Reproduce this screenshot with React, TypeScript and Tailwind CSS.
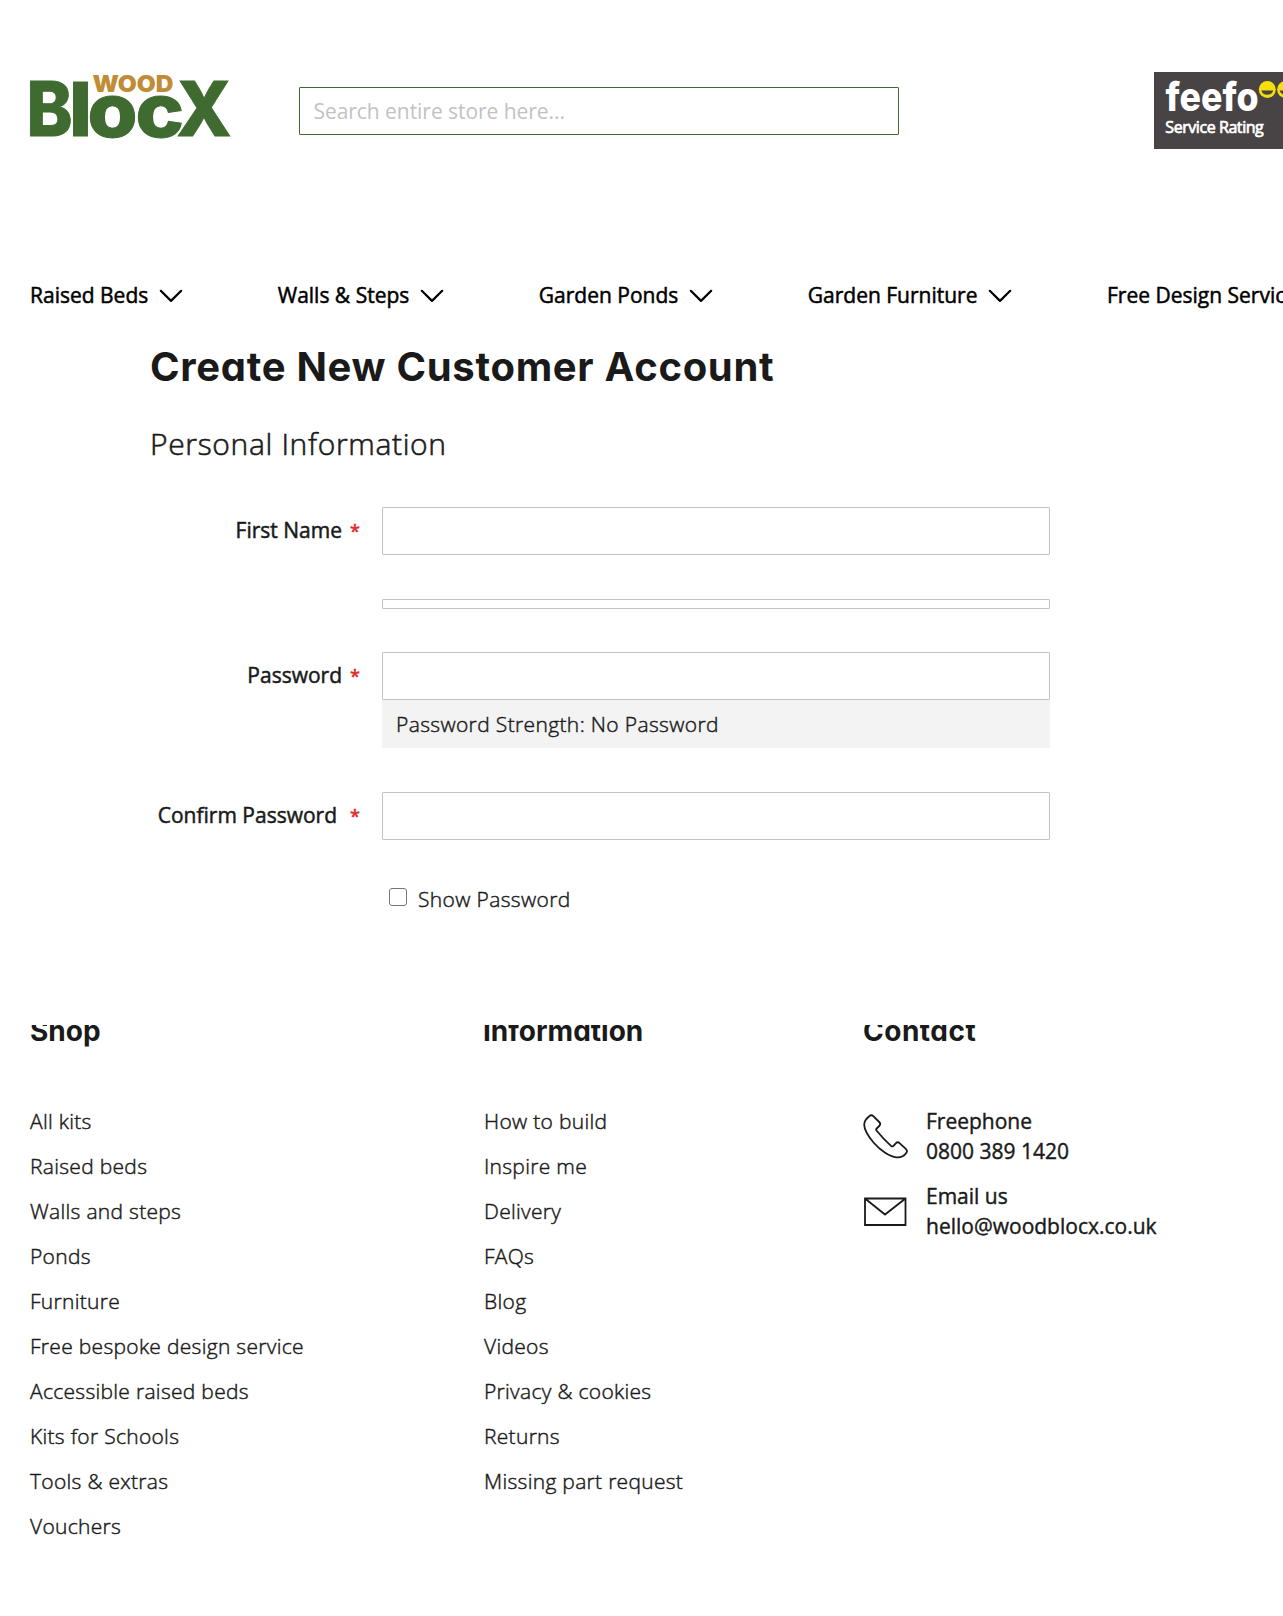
import type { ReactNode } from "react";

const NAV = ["Raised Beds", "Walls & Steps", "Garden Ponds", "Garden Furniture"];

const SHOP = [
  "All kits",
  "Raised beds",
  "Walls and steps",
  "Ponds",
  "Furniture",
  "Free bespoke design service",
  "Accessible raised beds",
  "Kits for Schools",
  "Tools & extras",
  "Vouchers",
];

const INFORMATION = [
  "How to build",
  "Inspire me",
  "Delivery",
  "FAQs",
  "Blog",
  "Videos",
  "Privacy & cookies",
  "Returns",
  "Missing part request",
];

function Logo() {
  return (
    <svg width="202" height="72" viewBox="30 70 202 72" className="block shrink-0 overflow-visible" aria-label="WoodBlocX">
      <g fontFamily="Inter, sans-serif" fontWeight="800" fill="#3f6b30" fontSize="75" stroke="#3f6b30" strokeWidth="1">
        <text x="26.5" y="136.3" textLength="46" lengthAdjust="spacingAndGlyphs">B</text>
        <text x="70" y="136.3" fontSize="74" fontWeight="900" textLength="21" lengthAdjust="spacingAndGlyphs">l</text>
        <text x="87.5" y="136.6" textLength="50" lengthAdjust="spacingAndGlyphs">o</text>
        <text x="135.5" y="136.6" textLength="48.5" lengthAdjust="spacingAndGlyphs">c</text>
        <text x="176.5" y="136.3" textLength="55" lengthAdjust="spacingAndGlyphs">X</text>
      </g>
      <text x="92.5" y="91.5" textLength="81" lengthAdjust="spacingAndGlyphs" fontFamily="Inter, sans-serif" fontWeight="900" fontSize="22.5" fill="#c08c36">
        WOOD
      </text>
    </svg>
  );
}

function Feefo() {
  return (
    <div className="h-[77px] w-[129px] shrink-0 bg-[#484344]">
      <svg width="129" height="77" viewBox="1154 72 129 77" className="block">
        <text x="1165.5" y="110.5" textLength="93" lengthAdjust="spacingAndGlyphs" fontFamily="Inter, sans-serif" fontWeight="800" fontSize="40" fill="#fff">
          feefo
        </text>
        {[1267.3, 1285.6].map((cx) => (
          <g key={cx}>
            <circle cx={cx} cy="89.5" r="8.5" fill="#f5de0c" />
            <path d={`M${cx - 6} 90.5h12a6.2 5.6 0 0 1-12 0z`} fill="#484344" />
          </g>
        ))}
        <text x="1165.3" y="132.5" textLength="98.5" fontFamily="'Open Sans', sans-serif" fontSize="16" fill="#fff" stroke="#fff" strokeWidth="0.7">
          Service Rating
        </text>
      </svg>
    </div>
  );
}

function Chevron() {
  return (
    <svg width="24" height="14" viewBox="0 0 24 14" className="block" fill="none" stroke="#000" strokeWidth="2.2" strokeLinecap="round" strokeLinejoin="round">
      <path d="M1.8 1.8 12 11.9 22.2 1.8" />
    </svg>
  );
}

function Row({ label, labelGap, children }: { label?: string; labelGap?: string; children?: ReactNode }) {
  return (
    <div className="flex">
      <div className="flex w-[231px] shrink-0 justify-end pt-2 pr-[23px] leading-[30px] [-webkit-text-stroke:0.5px_#1a1a1a]">
        {label && (
          <>
            <span className={labelGap}>{label}</span>
            <span className="w-[9px] text-[18px] leading-[32px] text-[#e02b27] [-webkit-text-stroke:0.6px_#e02b27]">*</span>
          </>
        )}
      </div>
      <div className="w-[668px]">{children}</div>
    </div>
  );
}

function Box() {
  return <input className="block h-12 w-full rounded-[1px] border border-[#c2c2c2] bg-white px-3.5 outline-none" />;
}

function FooterTitle({ children, className }: { children: ReactNode; className?: string }) {
  return (
    <div className="h-[25px] overflow-hidden">
      <h3 className={`-mt-[14px] font-['Inter'] text-[28px] leading-10 font-bold whitespace-nowrap [font-feature-settings:'cv11'] ${className ?? ""}`}>
        {children}
      </h3>
    </div>
  );
}

function LinkColumn({ title, links, titleClass }: { title: string; links: string[]; titleClass?: string }) {
  return (
    <div>
      <FooterTitle className={titleClass}>{title}</FooterTitle>
      <ul className="mt-14 flex flex-col gap-[15px] leading-[30px] font-light tracking-[0.3px] [-webkit-text-stroke:0.45px_#1a1a1a]">
        {links.map((l) => (
          <li key={l}>
            <a>{l}</a>
          </li>
        ))}
      </ul>
    </div>
  );
}

export default function App() {
  return (
    <div className="h-[1616px] w-full overflow-hidden bg-white font-['Open_Sans',sans-serif] text-[21px] text-[#1a1a1a]">
      <header className="flex h-[204px] items-start pt-[70px] pl-[30px]">
        <Logo />
        <input
          placeholder="Search entire store here..."
          className="mt-[17px] ml-[67px] h-12 w-[600px] shrink-0 rounded-[1px] border border-[#3f6b30] px-[13.5px] tracking-[-0.05px] outline-none placeholder:text-[#c2c2c2]"
        />
        <div className="mt-0.5 ml-auto">
          <Feefo />
        </div>
      </header>

      <nav className="mt-[76px] flex h-[30px] gap-[95px] pl-[30px] leading-[30px] whitespace-nowrap text-black [-webkit-text-stroke:0.5px_#000]">
        {NAV.map((n) => (
          <a key={n} className="flex items-center gap-[10.5px]">
            {n}
            <span className="pt-0.5">
              <Chevron />
            </span>
          </a>
        ))}
        <a>Free Design Service</a>
      </nav>

      <main className="mt-[34px] h-[681px] pl-[151px]">
        <h1 className="-ml-px font-['Inter'] text-[40px] leading-[46px] font-bold tracking-[0.7px] [font-feature-settings:'cv11']">
          Create New Customer Account
        </h1>
        <h2 className="mt-[34px] -ml-px text-[30px] leading-10 font-light tracking-[0.66px] [-webkit-text-stroke:0.6px_#1a1a1a]">Personal Information</h2>
        <form className="mt-[43px] flex flex-col">
          <Row label="First Name" labelGap="pr-2">
            <Box />
          </Row>
          <div className="mt-[5px]">
            <Row>
              <div className="mt-[39px] h-2.5 rounded-[1px] border border-[#c2c2c2]" />
            </Row>
          </div>
          <div className="mt-[43px]">
            <Row label="Password" labelGap="pr-2">
              <Box />
              <div className="h-12 bg-[#f3f3f3] px-3.5 pt-[9px] leading-[30px] font-light tracking-[0.36px] [-webkit-text-stroke:0.45px_#1a1a1a]">
                Password Strength: <span>No Password</span>
              </div>
            </Row>
          </div>
          <div className="mt-11">
            <Row label="Confirm Password" labelGap="pr-[13px]">
              <Box />
            </Row>
          </div>
          <label className="mt-11 ml-[238px] flex items-start gap-[11px] leading-[30px] font-light tracking-[0.36px] [-webkit-text-stroke:0.45px_#1a1a1a]">
            <span className="mt-1 block size-[18px] rounded-[3px] border-[1.5px] border-[#767676]" />
            Show Password
          </label>
        </form>
      </main>

      <footer className="grid grid-cols-[454px_380px_1fr] pl-[30px]">
        <LinkColumn title="Shop" links={SHOP} />
        <LinkColumn title="Information" links={INFORMATION} titleClass="-ml-px" />
        <div>
          <FooterTitle className="-ml-px tracking-[0.5px]">Contact</FooterTitle>
          <div className="mt-14 flex flex-col gap-[15px] leading-[30px] [-webkit-text-stroke:0.4px_#1a1a1a]">
            <div className="flex gap-[17px]">
              <svg width="46" height="46" viewBox="0 0 46 46" className="mt-2 -ml-px block" fill="none" stroke="#1a1a1a" strokeWidth="1.8" strokeLinejoin="round">
                <path d="M6.2 2.2C7.6.9 9 .9 10.3 2.2L16.2 8c1.3 1.3 1.3 2.7 0 4l-2.5 2.5c-.8.8-.8 1.4 0 2.3C17.5 21.6 22.5 26.8 28 31.8c1 .9 1.6.9 2.5 0l2.3-2.5c1.3-1.3 2.7-1.3 4 0l6 5.6c1.5 1.4 1.5 2.7.4 4.2-2.2 3.2-5.6 4.6-9.7 4.3C26.5 43 17 36 10.5 28.5 5 22 1.3 16 1.2 10.8 1.2 7 3.3 4.5 6.2 2.2z" />
              </svg>
              <div>
                Freephone
                <br />
                0800 389 1420
              </div>
            </div>
            <div className="flex gap-[19px]">
              <svg width="44" height="30" viewBox="0 0 44 30" className="mt-4 -ml-px block" fill="none" stroke="#1a1a1a" strokeWidth="1.8">
                <path d="M2 1.5h40.500v26.500h-40.500zM2 1.5 22 17.500 42.500 1.5" />
              </svg>
              <div>
                Email us
                <br />
                hello@woodblocx.co.uk
              </div>
            </div>
          </div>
        </div>
      </footer>
    </div>
  );
}
